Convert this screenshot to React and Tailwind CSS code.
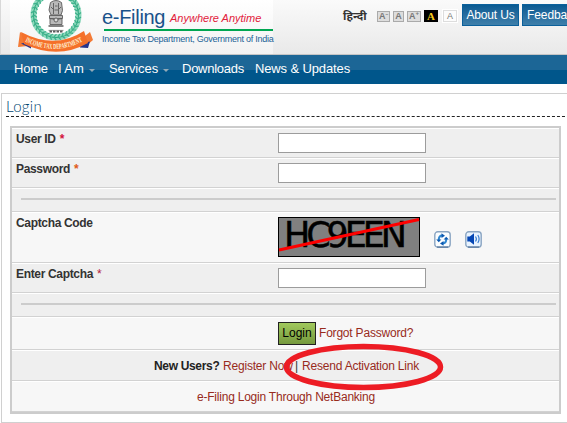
const leaves = Array.from({ length: 34 }, (_, i) => (i * 360) / 34);

function Emblem() {
  return (
    <svg className="block h-[54px] w-[78px]" viewBox="0 0 78 54">
      <g transform="translate(40 15)" fill="none">
        <circle r="22.500" stroke="#8fd9bd" strokeWidth="6" />
        <circle r="22.500" stroke="#28a67c" strokeWidth="1" />
        {leaves.map((a) => (
          <g key={a} transform={`rotate(${a})`} stroke="#3bb08a" strokeWidth="1.2">
            <path d="M22 0l3-2.5M22 0l-3-2.2" />
          </g>
        ))}
        <circle r="19" fill="#fff" />
      </g>
      <g stroke="#5b5b5b" fill="#b9b9b9" strokeWidth=".9" transform="translate(1 0)">
        <path d="M33.5 2.5q5.500-4 11 0l1 8-1.500 4.500h-10l-2-5z" />
        <path d="M36.500 3v11M41.500 3v11M38 6h2.500M37.500 10h3.500M34 7l2 2M44 7l-2 2" fill="none" />
        <path d="M32.500 15.500h13v3h-13zM33 18.500q6 3 12 0v6h-12z" />
        <circle cx="39" cy="20" r="2" fill="#ddd" />
        <path d="M31.500 26h15" strokeWidth="1.500" />
        <path d="M32.500 31.500h13" strokeWidth="2.200" strokeDasharray="2.500 1" />
        <path d="M31.500 30.400h15" strokeWidth=".6" />
      </g>
      <path d="M4 32L2 47l10-1 3-5zM74 32l3 8-7 6-6-6z" fill="#f47a35" />
      <path d="M5 43.500l10-2v7zM74 41.500l-10 2v4l8 .5z" fill="#26358b" />
      <path d="M5 32Q39 50 68 31l4 12Q42 60 8 44z" fill="#f5702a" />
      <path id="ribbon" d="M9 41.500Q40 57 69 40" fill="none" />
      <text fill="#fff5db" fontFamily="Liberation Serif, serif" fontWeight="700" fontSize="7.500">
        <textPath href="#ribbon" textLength="60" lengthAdjust="spacingAndGlyphs">INCOME TAX DEPARTMENT</textPath>
      </text>
    </svg>
  );
}

function RefreshIcon() {
  return (
    <svg className="block h-[17px] w-[17px]" viewBox="0 0 17 17">
      <rect x=".8" y=".8" width="15.400" height="15.400" rx="3" fill="#fafdff" stroke="#8aa5c2" strokeWidth="1.400" />
      <path d="M3 16h11" stroke="#496b92" />
      <path d="M4.800 9V7.800Q5.200 4.800 8 4.600M12.200 8v1.200Q11.800 12.200 9 12.400" fill="none" stroke="#2f86d0" strokeWidth="2" />
      <path d="M7.500 2.300l3.500 2.400L7.500 7zM9.500 10L6 12.400 9.500 14.700zM2.200 8.500h5.200l-2.600 2.800zM9.600 8.500h5.200l-2.600-2.800z" fill="#0b58b0" />
    </svg>
  );
}

function SoundIcon() {
  return (
    <svg className="block h-[17px] w-[17px]" viewBox="0 0 17 17">
      <rect x=".8" y=".8" width="15.400" height="15.400" rx="3" fill="#e8f3ff" stroke="#8aa5c2" strokeWidth="1.400" />
      <path d="M3 16h11" stroke="#496b92" />
      <path d="M2.300 5.500h2.500L9 2.300v11.400l-4.200-3.200H2.300z" fill="#0647b5" />
      <path d="M10.500 5.500q1.800 2.500 0 5M12.800 4q2.600 4 0 8" fill="none" stroke="#3c7fd0" strokeWidth="1.200" />
    </svg>
  );
}

function Row({ className, children }) {
  return <div className={"flex items-start border-b border-b-[#d2d2d2] border-t border-t-white " + className}>{children}</div>;
}

function Label({ text, star }) {
  return (
    <div className="w-[266px] shrink-0 pl-1 pt-[3px] text-[12px] leading-[14px] font-bold whitespace-nowrap text-[#333]">
      <span className="tracking-[-0.330px]">{text}</span>
      {star && <span className={"ml-[4px] text-[12px] " + star}>*</span>}
    </div>
  );
}

function Field() {
  return <input aria-label="field" className="mt-1 h-5 w-[148px] border border-[#9c9c9c] bg-white outline-none" />;
}

function Rule() {
  return <div className="mt-[9px] ml-[9px] h-[2px] w-[535px] bg-[#ccc]" />;
}

function Caret() {
  return <span className="mt-[3px] ml-[5px] h-0 w-0 border-x-[3px] border-t-[3px] border-x-transparent border-t-[#91a9b7]" />;
}

export default function App() {
  return (
    <div className="h-[423px] w-[567px] overflow-hidden bg-white font-['Liberation_Sans',Arial,sans-serif]">
      <header className="flex h-[55px] items-start border-b border-[#c5c5c5] border-l border-l-[#d8d8d8] bg-linear-to-b from-[#fafafa] to-[#e9e9e9]">
        <div className="ml-[9px] flex h-[54px] w-[263px] shrink-0 bg-linear-to-b from-white to-[#f2f2f2]">
          <div className="ml-[6px] w-[78px] shrink-0"><Emblem /></div>
          <div className="ml-[8px] w-[171px] shrink-0">
            <div className="flex h-[29px] items-start whitespace-nowrap">
              <span className="mt-[5px] w-[68px] text-[20px] leading-[24px] tracking-[-0.300px] text-[#19528a]">e-Filing</span>
              <span className="mt-[11px] text-[11px] leading-[14px] text-[#e2203b] italic">Anywhere Anytime</span>
            </div>
            <div className="ml-[2px] h-[2px] w-[169px] bg-[#00a651]" />
            <div className="mt-[3px] text-[9px] leading-[11px] tracking-[-0.250px] whitespace-nowrap text-[#1c6396]">Income Tax Department, Government of India</div>
          </div>
        </div>
        <div className="mt-[6px] ml-[70px] w-[34px] shrink-0 text-[11.500px] leading-[20px] font-bold whitespace-nowrap text-[#333] font-['Noto_Sans',sans-serif]">हिन्दी</div>
        <div className="mt-[9px] flex h-[14px] w-[85px] shrink-0 items-center text-[#777]">
          <span className="flex h-[11px] w-[13px] shrink-0 items-center border border-[#aaa] bg-[#ddd] pl-px text-[9px] leading-[9px] font-bold">A<sup className="text-[5px]">−</sup></span>
          <span className="ml-[3px] flex h-[11px] w-[11px] shrink-0 items-center justify-center border border-[#aaa] bg-[#ddd] text-[9px] leading-[9px] font-bold">A</span>
          <span className="ml-[3px] flex h-[11px] w-[14px] shrink-0 items-center border border-[#aaa] bg-[#ddd] pl-px text-[9px] leading-[9px] font-bold">A<sup className="text-[6px]">+</sup></span>
          <span className="ml-[3px] flex h-[12px] w-[14px] shrink-0 items-center justify-center bg-black font-['Liberation_Serif',serif] text-[11px] leading-[12px] font-bold text-[#f7c91b]">A</span>
          <span className="ml-[4px] flex h-[14px] w-[16px] shrink-0 items-center justify-center border-2 border-white bg-[#fcfcfc] text-[9px] leading-[10px] outline-1 -outline-offset-2 outline-[#ddd]">A</span>
        </div>
        <div className="mt-1 h-[22px] w-[57px] shrink-0 border border-[#0b609b] bg-linear-to-b from-[#075a92] to-[#3e7faa] text-center text-[12px] leading-[21px] tracking-[-0.150px] whitespace-nowrap text-white">About Us</div>
        <div className="mt-1 ml-[3px] h-[22px] w-[64px] shrink-0 border border-[#0b609b] bg-linear-to-b from-[#075a92] to-[#3e7faa] pl-[4px] text-[12px] leading-[21px] tracking-[-0.100px] whitespace-nowrap text-white">Feedback</div>
      </header>

      <nav className="flex h-[29px] bg-linear-to-b from-[#1c6696] from-52% to-[#00568b] to-52% pl-[14px] text-[13px] leading-[27px] whitespace-nowrap text-white">
        <span className="w-[44px] tracking-[-0.200px]">Home</span>
        <span className="flex h-[27px] w-[51px] items-center"><span className="tracking-[-0.100px]">I Am</span><Caret /></span>
        <span className="flex h-[27px] w-[73px] items-center"><span className="tracking-[-0.100px]">Services</span><Caret /></span>
        <span className="w-[73px] tracking-[-0.250px]">Downloads</span>
        <span className="tracking-[-0.130px]">News &amp; Updates</span>
      </nav>

      <main className="mt-[9px] ml-px h-[330px] w-[580px] border border-[#d0d0d0] pl-1">
        <h1 className="h-[23px] border-b border-dashed border-[#222] pt-[2px] font-['Lato',sans-serif] text-[15px] leading-[20px] font-light tracking-[0.300px] text-[#00446f]">Login</h1>
        <form className="mt-[9px] ml-[4px] h-[288px] w-[551px] border-2 border-[#ccc] bg-[#efefef] text-[12px]">
          <Row className="h-[30px]"><Label text="User ID" star="text-[#d3123b]" /><Field /></Row>
          <Row className="h-[30px]"><Label text="Password" star="text-[#e05a1b]" /><Field /></Row>
          <Row className="h-6"><Rule /></Row>
          <Row className="h-[51px] bg-[#f7f7f7]">
            <Label text="Captcha Code" />
            <div className="mt-1 h-[40px] w-[142px] border border-black bg-[#808080]">
              <svg className="block h-[38px] w-[140px] overflow-visible" viewBox="0 0 140 38">
                <text x="5" y="28.500" fontFamily="DejaVu Sans, sans-serif" fontSize="35" stroke="#000" strokeWidth=".5" textLength="123" lengthAdjust="spacing">HC9EEN</text>
                <path d="M0 32L140 1.500" stroke="#f00" strokeWidth="3" />
              </svg>
            </div>
            <div className="mt-[18px] ml-[14px] flex gap-[14px]"><RefreshIcon /><SoundIcon /></div>
          </Row>
          <Row className="h-[30px]"><Label text="Enter Captcha" star="text-[#b3203b] font-normal" /><Field /></Row>
          <Row className="h-6"><Rule /></Row>
          <Row className="h-[33px] bg-[#f7f7f7]">
            <button type="button" className="mt-1 ml-[266px] h-[23px] w-[38px] border border-[#222] bg-linear-to-b from-[#a1c95d] to-[#75993d] text-[12px] leading-[19px] text-black">Login</button>
            <a className="mt-[7px] ml-[3px] leading-[16px] tracking-[-0.200px] whitespace-nowrap text-[#982b1c]">Forgot Password?</a>
          </Row>
          <Row className="relative h-[31px]">
            <div className="ml-[142px] flex pt-[7px] leading-[16px] whitespace-nowrap text-[#982b1c]">
              <b className="w-[69px] tracking-[-0.330px] text-[#222]">New Users?</b>
              <a className="w-[72px] tracking-[-0.200px]">Register Now</a>
              <span className="w-[7px] text-[#333]">|</span>
              <a className="tracking-[-0.200px]">Resend Activation Link</a>
            </div>
            <svg className="absolute top-[-9px] left-[270px] h-[50px] w-[163px]" viewBox="0 0 163 50">
              <ellipse cx="81.500" cy="25" rx="77" ry="20.500" fill="none" stroke="#ed1c24" strokeWidth="5.500" />
            </svg>
          </Row>
          <Row className="h-[31px] bg-[#f7f7f7]">
            <a className="mt-[7px] ml-[185px] leading-[16px] tracking-[-0.220px] whitespace-nowrap text-[#982b1c]">e-Filing Login Through NetBanking</a>
          </Row>
        </form>
      </main>
    </div>
  );
}
